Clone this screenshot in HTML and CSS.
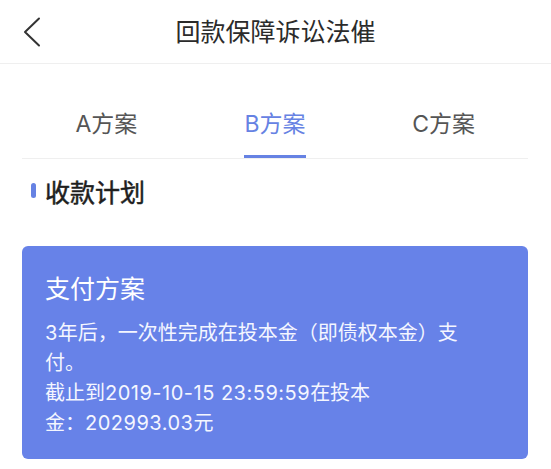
FILE: index.html
```html
<!DOCTYPE html>
<html lang="zh-CN">
<head>
<meta charset="utf-8">
<title>回款保障诉讼法催</title>
<link rel="stylesheet" href="styles.css">
</head>
<body>
<header class="nav">
  <div class="nav-back">
    <svg class="back-icon" width="18" height="30" viewBox="0 0 18 30">
      <polyline points="16,1.5 2,15 16,28.5" fill="none" stroke="#333" stroke-width="2" stroke-linecap="round" stroke-linejoin="round"/>
    </svg>
  </div>
  <h1 class="nav-title">回款保障诉讼法催</h1>
  <div class="nav-right"></div>
</header>

<nav class="tabs">
  <div class="tab"><span class="tab-label">A方案</span></div>
  <div class="tab"><span class="tab-label active">B方案</span></div>
  <div class="tab"><span class="tab-label">C方案</span></div>
</nav>

<section class="plan">
  <h2 class="section-title"><span class="section-bar"></span>收款计划</h2>
  <div class="card">
    <div class="card-title">支付方案</div>
    <p class="card-text"><span class="num">3</span>年后，一次性完成在投本金（即债权本金）支<br>付。<br>截止到<span class="num">2019-10-15 23:59:59</span>在投本<br>金：<span class="num">202993.03</span>元</p>
  </div>
</section>
</body>
</html>
```

FILE: styles.css
```css
* { box-sizing: border-box; }
html, body { margin: 0; padding: 0; background: #fff; }
body {
  font-family: Inter, "Noto Sans CJK SC", sans-serif;
  color: #333;
  width: 551px;
}

.nav {
  display: grid;
  grid-template-columns: 1fr auto 1fr;
  align-items: center;
  height: 64px;
  border-bottom: 1px solid #efefef;
}
.nav-back { padding-left: 23px; display: flex; align-items: center; }
.back-icon { display: block; }
.nav-title {
  margin: 0;
  font-size: 25px;
  font-weight: 400;
  color: #2b2b2b;
  line-height: 34px;
}

.tabs {
  display: grid;
  grid-template-columns: 1fr 1fr 1fr;
  margin: 0 23px 0 22px;
  border-bottom: 1px solid #efefef;
  height: 95px;
}
.tab {
  display: flex;
  justify-content: center;
  padding-top: 45px;
}
.tab-label {
  display: inline-block;
  font-size: 23px;
  line-height: 30px;
  color: #555;
  padding-bottom: 16px;
  border-bottom: 3px solid transparent;
  height: 49px;
}
.tab-label.active {
  color: #6682e3;
  border-bottom-color: #6682e3;
}

.plan { padding: 0 23px 0 22px; }
.section-title {
  display: flex;
  align-items: center;
  margin: 0;
  padding: 16px 0 0 9px;
  font-size: 25px;
  line-height: 36px;
  font-weight: 400;
  -webkit-text-stroke: 0.5px #1e1e1e;
  color: #1e1e1e;
}
.section-bar {
  width: 5px;
  height: 15px;
  border-radius: 2.5px;
  background: #6682e3;
  margin-right: 9px;
  margin-bottom: 5px;
}

.card {
  margin-top: 35px;
  background: #6782e8;
  border-radius: 6px;
  padding: 25px 23px 21px;
  color: #fff;
}
.card-title {
  font-size: 25px;
  line-height: 36px;
}
.card-text {
  margin: 11px 0 0;
  font-size: 20px;
  line-height: 30px;
  color: #f4f6ff;
}
.num { letter-spacing: 0.5px; }
```
